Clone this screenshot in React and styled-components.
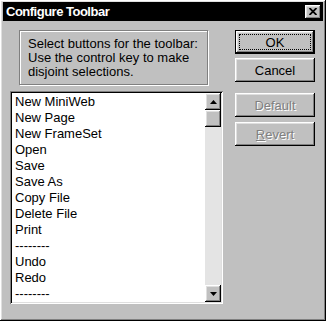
import React from 'react'
import styled, { createGlobalStyle } from 'styled-components'

const GlobalStyle = createGlobalStyle`
  html, body {
    margin: 0;
    padding: 0;
    background: #c0c0c0;
  }
  * {
    box-sizing: border-box;
  }
`

const raised = `
  box-shadow: inset -1px -1px #000, inset 1px 1px #fff,
    inset -2px -2px #808080, inset 2px 2px #dfdfdf;
`

const Window = styled.div`
  width: 326px;
  height: 321px;
  background: #c0c0c0;
  padding: 2px 3px 3px 3px;
  ${raised}
  font-family: "Liberation Sans", Arial, sans-serif;
  font-size: 13px;
  color: #000;
  display: flex;
  flex-direction: column;
`

const TitleBar = styled.div`
  height: 19px;
  background: #000;
  display: flex;
  align-items: center;
  justify-content: space-between;
  padding: 0 2px 0 3px;
`

const Title = styled.span`
  color: #fff;
  font-weight: bold;
  font-size: 13px;
  letter-spacing: -0.5px;
`

const CloseButton = styled.div`
  width: 16px;
  height: 14px;
  background: #c0c0c0;
  ${raised}
  display: flex;
  align-items: center;
  justify-content: center;
`

const Body = styled.div`
  display: flex;
  padding: 9px 0 0 7px;
`

const LeftColumn = styled.div`
  width: 213px;
  display: flex;
  flex-direction: column;
`

const InfoBox = styled.div`
  margin-left: 9px;
  width: 189px;
  height: 55px;
  border: 1px solid #808080;
  box-shadow: inset 1px 1px #fff, 1px 1px #fff;
  padding: 6px 0 0 8px;
  line-height: 14px;
`

const ListBox = styled.div`
  margin-top: 6px;
  height: 213px;
  width: 213px;
  padding: 2px;
  background: #fff;
  box-shadow: inset 1px 1px #808080, inset -1px -1px #fff,
    inset 2px 2px #000, inset -2px -2px #dfdfdf;
  display: flex;
`

const Items = styled.div`
  flex: 1;
  padding: 1px 0 0 3px;
  overflow: hidden;
`

const Item = styled.div`
  height: 16px;
  line-height: 16px;
  white-space: nowrap;
`

const ScrollBar = styled.div`
  width: 16px;
  display: flex;
  flex-direction: column;
  background: #e4e4e4;
`

const ScrollButton = styled.div`
  height: 17px;
  background: #c0c0c0;
  ${raised}
  display: flex;
  align-items: center;
  justify-content: center;
`

const Track = styled.div`
  flex: 1;
`

const RightColumn = styled.div`
  margin-left: 12px;
  width: 80px;
  display: flex;
  flex-direction: column;
`

const Button = styled.div`
  height: 24px;
  margin-top: ${p => p.$gap || 0}px;
  background: #c0c0c0;
  ${raised}
  display: flex;
  align-items: center;
  justify-content: center;
  color: ${p => (p.$disabled ? '#808080' : '#000')};
  text-shadow: ${p => (p.$disabled ? '1px 1px #fff' : 'none')};
  ${p => p.$default && `
    border: 1px solid #000;
    padding: 3px;
  `}
`

const Focus = styled.span`
  flex: 1;
  align-self: stretch;
  border: 1px dotted #000;
  display: flex;
  align-items: center;
  justify-content: center;
`

const items = [
  'New MiniWeb',
  'New Page',
  'New FrameSet',
  'Open',
  'Save',
  'Save As',
  'Copy File',
  'Delete File',
  'Print',
  '--------',
  'Undo',
  'Redo',
  '--------',
]

const Arrow = ({ up }) => (
  <svg width="7" height="4" viewBox="0 0 7 4">
    <path d={up ? 'M3.5 0 L7 4 L0 4 Z' : 'M0 0 L7 0 L3.5 4 Z'} fill="#000" />
  </svg>
)

export default function App() {
  return (
    <>
      <GlobalStyle />
      <Window>
        <TitleBar>
          <Title>Configure Toolbar</Title>
          <CloseButton>
            <svg width="8" height="7" viewBox="0 0 8 7">
              <path d="M0.5 0 L7.5 7 M7.5 0 L0.5 7" stroke="#000" strokeWidth="1.8" />
            </svg>
          </CloseButton>
        </TitleBar>
        <Body>
          <LeftColumn>
            <InfoBox>
              Select buttons for the toolbar:
              <br />
              Use the control key to make
              <br />
              disjoint selections.
            </InfoBox>
            <ListBox>
              <Items>
                {items.map((t, i) => (
                  <Item key={i}>{t}</Item>
                ))}
              </Items>
              <ScrollBar>
                <ScrollButton>
                  <Arrow up />
                </ScrollButton>
                <ScrollButton />
                <Track />
                <ScrollButton>
                  <Arrow />
                </ScrollButton>
              </ScrollBar>
            </ListBox>
          </LeftColumn>
          <RightColumn>
            <Button $default>
              <Focus>OK</Focus>
            </Button>
            <Button $gap={4}>Cancel</Button>
            <Button $gap={11} $disabled>Default</Button>
            <Button $gap={5} $disabled>
              <span><u>R</u>evert</span>
            </Button>
          </RightColumn>
        </Body>
      </Window>
    </>
  )
}
